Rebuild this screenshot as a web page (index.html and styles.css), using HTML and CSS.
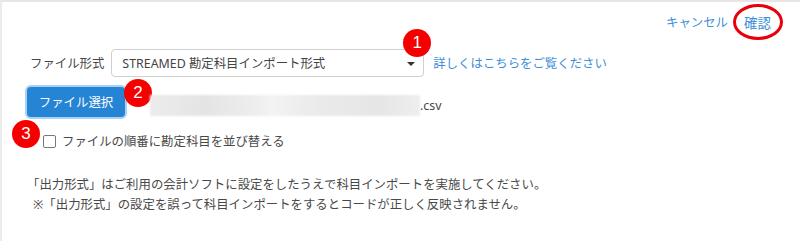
FILE: index.html
```html
<!DOCTYPE html>
<html lang="ja">
<head>
<meta charset="utf-8">
<link rel="stylesheet" href="styles.css">
</head>
<body>
<div class="panel">
  <div class="topbar">
    <a class="link">キャンセル</a>
    <span class="confirm-wrap"><a class="link">確認</a><span class="ring"></span></span>
  </div>
  <div class="row format-row">
    <span class="label">ファイル形式</span>
    <span class="select-wrap">
      <span class="select">STREAMED 勘定科目インポート形式<span class="caret"></span></span>
      <span class="badge badge-1">1</span>
    </span>
    <a class="link detail">詳しくはこちらをご覧ください</a>
  </div>
  <div class="row file-row">
    <span class="btn-wrap">
      <span class="btn">ファイル選択</span>
      <span class="badge badge-2">2</span>
    </span>
    <span class="filename"><span class="blur"></span>.csv</span>
  </div>
  <div class="row check-row">
    <span class="badge badge-3">3</span>
    <span class="checkbox"></span>
    <span class="check-label">ファイルの順番に勘定科目を並び替える</span>
  </div>
  <div class="notes">
    <p class="note">「出力形式」はご利用の会計ソフトに設定をしたうえで科目インポートを実施してください。</p>
    <p class="note indent">※「出力形式」の設定を誤って科目インポートをするとコードが正しく反映されません。</p>
  </div>
</div>
</body>
</html>
```
FILE: styles.css
```css
html, body {
  margin: 0;
  padding: 0;
  background: #fff;
}
body {
  font-family: "Noto Sans", "Noto Sans CJK JP", sans-serif;
  font-size: 12.4px;
  color: #484848;
}
.panel {
  border-top: 2px solid #e6e6e6;
  border-left: 2px solid #ececec;
  padding-left: 25px;
  box-sizing: border-box;
  height: 241px;
}
.topbar {
  display: flex;
  justify-content: flex-end;
  align-items: center;
  height: 40px;
  gap: 16px;
  padding-right: 29px;
}
.link {
  color: #3d8fd8;
  text-decoration: none;
}
.confirm-wrap {
  position: relative;
  font-size: 13.5px;
  display: flex;
  align-items: center;
}
.ring {
  position: absolute;
  left: -11px;
  top: 50%;
  margin-top: -18px;
  width: 44px;
  height: 30px;
  border: 3px solid #e8000b;
  border-radius: 50%;
}
.row {
  display: flex;
  align-items: center;
}
.format-row {
  margin-top: 7px;
  height: 28px;
}
.label {
  margin-left: 3px;
  margin-right: 7px;
}
.select-wrap {
  position: relative;
}
.select {
  display: flex;
  align-items: center;
  width: 313px;
  height: 28px;
  box-sizing: border-box;
  border: 1px solid #d0d0d0;
  border-radius: 4px;
  padding-left: 10px;
  color: #444;
  position: relative;
}
.caret {
  position: absolute;
  right: 8px;
  top: 12px;
  width: 0;
  height: 0;
  border-left: 4px solid transparent;
  border-right: 4px solid transparent;
  border-top: 4px solid #333;
}
.badge {
  position: absolute;
  width: 28px;
  height: 28px;
  border-radius: 50%;
  background: #f50000;
  color: #fff;
  font-family: "Liberation Sans", Arial, sans-serif;
  font-size: 17px;
  display: flex;
  align-items: center;
  justify-content: center;
}
.badge-1 {
  left: 292px;
  top: -20px;
}
.detail {
  margin-left: 9px;
}
.file-row {
  margin-top: 10px;
  height: 30px;
}
.btn-wrap {
  position: relative;
}
.btn {
  display: flex;
  align-items: center;
  justify-content: center;
  width: 98px;
  height: 30px;
  box-sizing: border-box;
  background: #2684d4;
  color: #fff;
  border-radius: 4px;
  box-shadow: 0 0 0 2px #a9d1f5;
}
.badge-2 {
  left: 97px;
  top: -8px;
}
.filename {
  display: flex;
  align-items: center;
  margin-left: 25px;
  margin-top: 6px;
}
.blur {
  display: block;
  width: 270px;
  height: 21px;
  background: linear-gradient(90deg, #ececec 0%, #e4e4e4 20%, #eeeeee 40%, #f3f3f3 45%, #ebebeb 60%, #e6e6e6 85%, #eeeeee 100%);
  filter: blur(1px);
}
.check-row {
  position: relative;
  margin-top: 12px;
  height: 24px;
}
.badge-3 {
  left: -15px;
  top: -9px;
}
.checkbox {
  width: 11px;
  height: 11px;
  border: 1px solid #777;
  border-radius: 2px;
  margin-left: 16px;
  margin-right: 6px;
  background: #fff;
}
.notes {
  margin-top: 22px;
}
.note {
  margin: 0;
  line-height: 20px;
}
.indent {
  padding-left: 6px;
}
```
